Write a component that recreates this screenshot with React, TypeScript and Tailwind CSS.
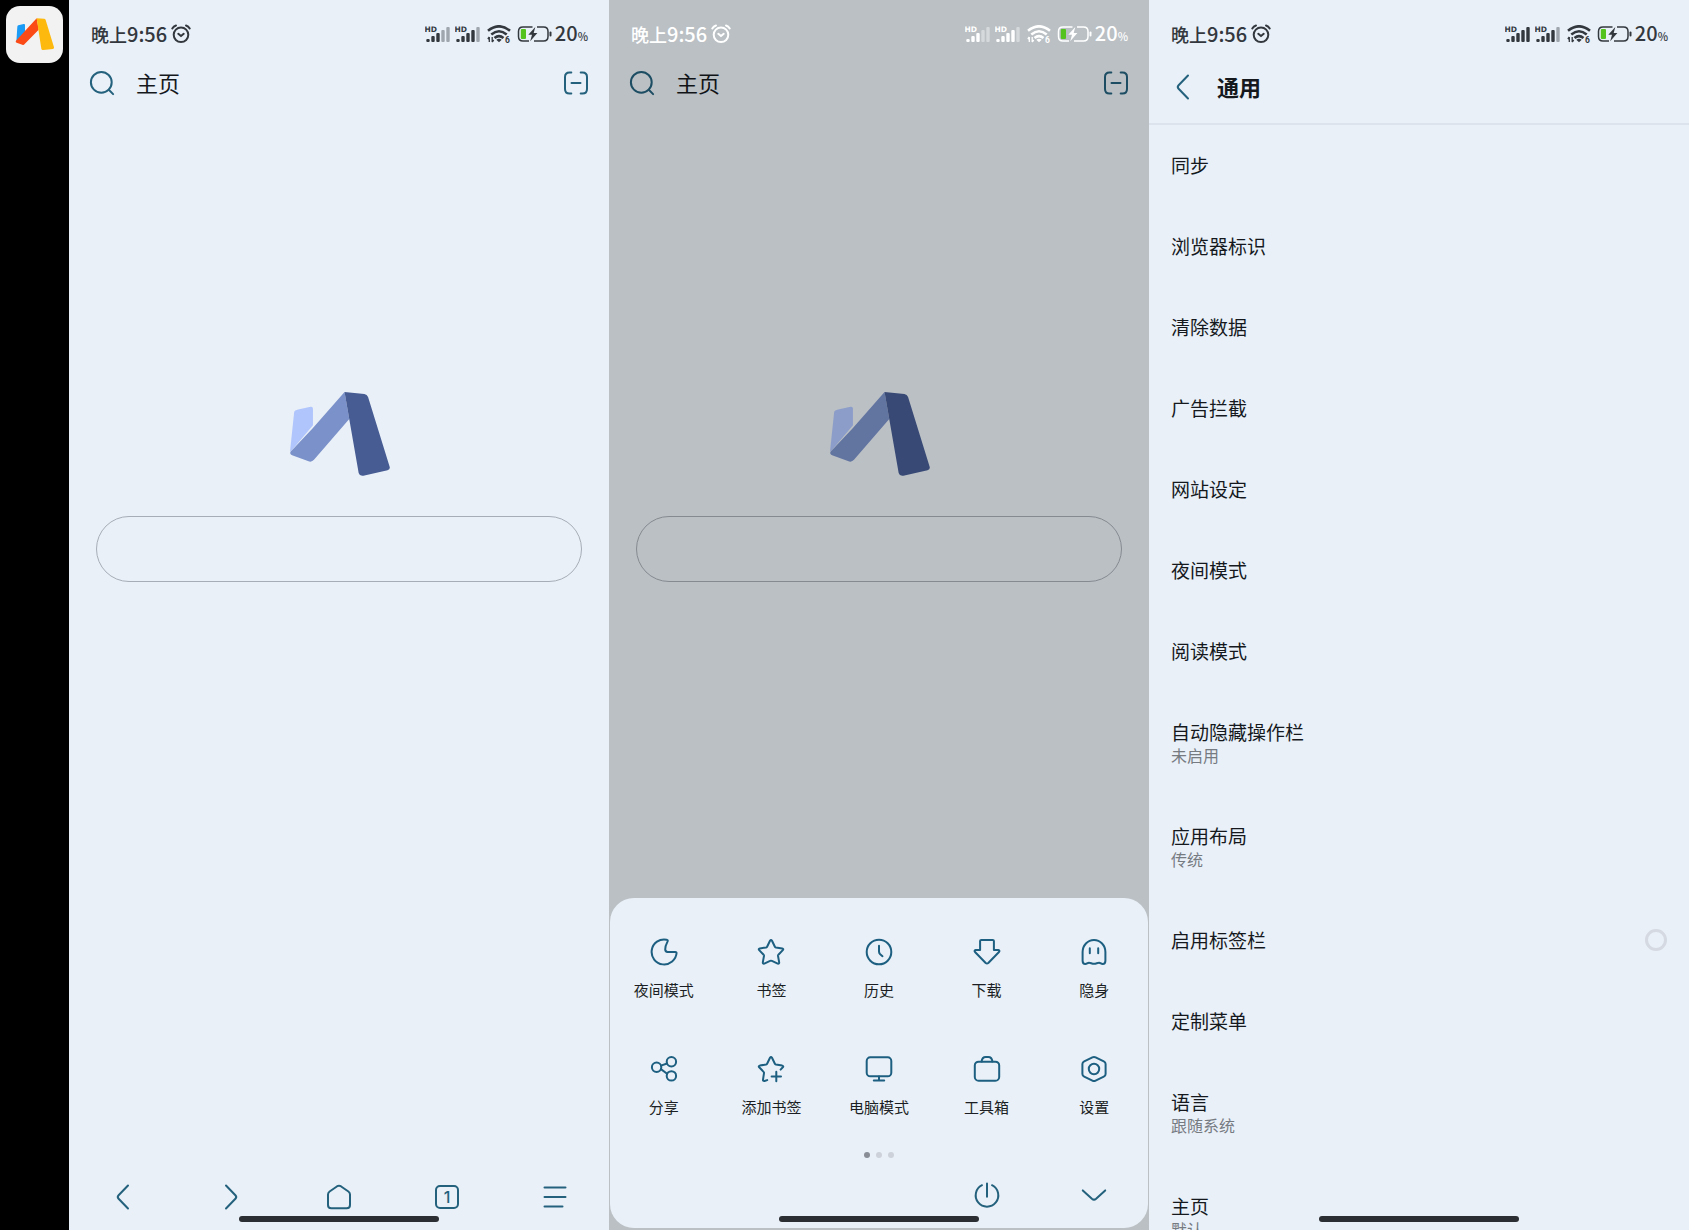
import React from "react";

type IconProps = { children: React.ReactNode; size?: number };

function Icon({ children, size = 28 }: IconProps) {
  return (
    <svg
      width={size}
      height={size}
      viewBox="0 0 28 28"
      fill="none"
      stroke="currentColor"
      strokeWidth="2"
      strokeLinecap="round"
      strokeLinejoin="round"
      aria-hidden="true"
    >
      {children}
    </svg>
  );
}

const ChevronLeft = () => (
  <Icon>
    <path d="M19 2.5 9.6 12.2q-1.7 1.8 0 3.6L19 25.5" />
  </Icon>
);
const ChevronRight = () => (
  <Icon>
    <path d="M9 2.5l9.4 9.7q1.7 1.8 0 3.6L9 25.5" />
  </Icon>
);
const ChevronDown = () => (
  <Icon>
    <path d="M2.8 9.4l9.1 8.3q2.1 1.8 4.2 0l9.1-8.3" />
  </Icon>
);
const HomeIcon = () => (
  <Icon>
    <path d="M12.2 3.2q1.8-1.1 3.6 0l7.6 5.3q1.6 1.1 1.6 3V22q0 3.3-3.3 3.3H6.3Q3 25.3 3 22V11.500q0-1.900 1.600-3z" />
  </Icon>
);
const MenuIcon = () => (
  <Icon>
    <path d="M3.500 4.500h21M3.500 14h21M3.500 23.500h18" />
  </Icon>
);
const SearchIcon = () => (
  <Icon>
    <circle cx="13.300" cy="13.300" r="10.400" />
    <path d="M20.800 20.800l4.300 4.300" />
  </Icon>
);
const ScanIcon = () => (
  <Icon>
    <path d="M9.300 3.500H7.500q-4.500 0-4.500 4.500v12q0 4.500 4.500 4.500h1.800M18.700 3.500h1.800q4.500 0 4.500 4.500v12q0 4.500-4.500 4.500h-1.800M9.500 14h9" />
  </Icon>
);
const MoonIcon = () => (
  <Icon>
    <path d="M16.600 1.700A12.500 12.500 0 1 0 26.600 14.800Q26.500 13.900 25.400 13.900H17.500Q15.300 13.700 15.200 11.400Q15.200 8 17.600 3.400Q18.200 2.100 16.600 1.700Z" />
  </Icon>
);
const StarIcon = () => (
  <Icon>
    <path d="M13 2.700q1-1.600 2 0l2.900 6q.3.600 1 .8l6.300.9q1.700.4.600 1.700l-4.400 4.600q-.5.500-.4 1.200l1.200 6.500q.1 1.700-1.500 1.200l-5.800-2.700q-.9-.4-1.800 0l-5.800 2.700q-1.600.500-1.500-1.200L7 17.900q.1-.7-.4-1.200l-4.400-4.600q-1.100-1.300.6-1.700l6.300-.9q.7-.2 1-.8z" />
  </Icon>
);
const StarPlusIcon = () => (
  <Icon>
    <path d="M10.200 25.100l-2.700.9q-1.600.300-1.500-1.300L7 18.100q.1-.7-.4-1.200l-4.400-4.600q-1.100-1.300.6-1.700l6.300-1.100q.7-.2 1-.8L13 2.800q1-1.500 2 0l2.900 5.900q.3.600 1 .8l6.300 1.100q1.700.4.600 1.700l-2.200 2.300" />
    <path d="M19.300 16.800v9.400M14.600 21.500H24" />
  </Icon>
);
const ClockIcon = () => (
  <Icon>
    <circle cx="14" cy="14" r="12.300" />
    <path d="M14 7.800v5.800q0 1.600 1.200 2.700l2.300 1.900" />
  </Icon>
);
const DownloadIcon = () => (
  <Icon>
    <path d="M8.300 1.900h11.400q1.200 0 1.200 1.200v9h4.400q1.900.4.700 1.900L15.300 25q-1.300 1.100-2.600 0L2 14q-1.200-1.500.7-1.900h4.400v-9q0-1.200 1.200-1.200z" />
  </Icon>
);
const GhostIcon = () => (
  <Icon>
    <path d="M2.600 14a11.400 12.100 0 0 1 22.800 0v8.700q0 3.200-2.700 3.300c-1.600.1-2-1.300-3.700-1.300s-2.900 1.100-5 1.100-3.300-1.100-5-1.100-2.100 1.400-3.700 1.300q-2.700-.1-2.700-3.300z" />
    <path d="M9.800 10.300v5M18.200 10.300v5" />
  </Icon>
);
const ShareIcon = () => (
  <Icon>
    <circle cx="6.600" cy="12.200" r="4.700" />
    <circle cx="21.400" cy="6.700" r="4.700" />
    <circle cx="21.400" cy="20.900" r="4.700" />
    <path d="M11 10.600l6-2.100M10.900 14.100l6.200 4.700" />
  </Icon>
);
const MonitorIcon = () => (
  <Icon>
    <rect x="1.700" y="2.300" width="24.600" height="19" rx="3.600" />
    <path d="M14 21.500v3.900M8.800 25.500h10.400" />
  </Icon>
);
const ToolboxIcon = () => (
  <Icon>
    <rect x="1.800" y="6.700" width="24.400" height="19" rx="3.800" />
    <path d="M8.600 6.500q.6-4.600 4.100-4.600h2.600q3.500 0 4.100 4.600" />
  </Icon>
);
const SettingsIcon = () => (
  <Icon>
    <path d="M12.400 2.300q1.600-.8 3.200 0l8.200 4q1.800.9 1.800 2.800v9.800q0 1.900-1.800 2.800l-8.200 4q-1.600.8-3.200 0l-8.200-4q-1.800-.9-1.800-2.800V9.100q0-1.900 1.800-2.800z" />
    <circle cx="14" cy="14" r="5.200" />
  </Icon>
);
const PowerIcon = () => (
  <Icon>
    <path d="M9 4.200a11.300 11.300 0 1 0 10 0M14 2.500v13.300" />
  </Icon>
);

function Signal({ strong }: { strong: number }) {
  return (
    <svg width="25" height="18" viewBox="0 0 25 18" fill="currentColor" aria-hidden="true">
      <text x="-0.500" y="6.500" fontSize="7.500" fontWeight="700" fontFamily="DejaVu Sans, sans-serif">
        HD
      </text>
      {[3, 6, 9, 12, 15].map((h, i) => (
        <rect
          key={h}
          x={1.3 + i * 5}
          y={17 - h}
          width="3.400"
          height={h}
          rx="1"
          opacity={i < strong ? 1 : 0.4}
        />
      ))}
    </svg>
  );
}

function StatusBar({ signals, light = false }: { signals: [number, number]; light?: boolean }) {
  return (
    <div
      className={`relative z-10 flex h-[68px] shrink-0 items-center justify-between pr-[21px] pl-[22px] ${
        light ? "text-white" : "text-[#33383e]"
      }`}
    >
      <div className="flex items-center gap-1 font-medium">
        <span className="flex items-baseline text-lg leading-6">
          晚上<span className="text-[20px]">9:56</span>
        </span>
        <svg
          width="20"
          height="20"
          viewBox="0 0 20 20"
          fill="none"
          stroke="currentColor"
          strokeWidth="2"
          strokeLinecap="round"
          strokeLinejoin="round"
          aria-hidden="true"
        >
          <circle cx="10" cy="10.800" r="7.300" />
          <path d="M1.300 4.400Q2.600 2.200 5 1.500M18.700 4.400Q17.400 2.200 15 1.500M7.300 9.800l2.700 2.300 2.700-2.300" />
        </svg>
      </div>
      <div className="flex items-center">
        <Signal strong={signals[0]} />
        <span className="w-[5px]" />
        <Signal strong={signals[1]} />
        <svg className="ml-[7px]" width="24" height="18" viewBox="0 0 24 18" aria-hidden="true">
          <g fill="none" stroke="currentColor" strokeWidth="2.600">
            <path d="M1 5.800Q12-3.200 23 5.800" />
            <path d="M4.300 9.500Q12 3 19.700 9.500" />
            <path d="M7.500 13Q12 9.300 16.500 13" />
          </g>
          <path d="M9.300 14.800q2.700-1.900 5.400 0L12 17.300z" fill="currentColor" />
          <path d="M2.300 12v5M0.800 14l1.500-2M5.200 12v5M5.200 17l1.500-2" stroke="currentColor" strokeWidth="1.300" />
          <text x="18" y="17.500" fontSize="8.500" fontWeight="700" fill="currentColor" fontFamily="Roboto, sans-serif">
            6
          </text>
        </svg>
        <svg className="ml-[6px]" width="35" height="18" viewBox="0 0 35 18" aria-hidden="true">
          <path
            d="M15.500 1.900H6Q1.500 1.900 1.500 6.400v5Q1.500 15.900 6 15.900H12M20 1.900h6.500q4.500 0 4.500 4.500v5q0 4.500-4.500 4.500H17"
            fill="none"
            stroke="currentColor"
            strokeWidth="1.500"
          />
          <rect x="3.800" y="4" width="5.200" height="10" rx="1" fill="#55c31f" />
          <path d="M18.300 2 11.300 9.800h3.700L13.200 16.300l7.200-8.200h-3.700z" fill="currentColor" />
          <rect x="32.500" y="6.500" width="2" height="5" rx="1" fill="currentColor" />
        </svg>
        <span className="ml-[3px] flex items-baseline text-[20px] leading-6 font-medium">
          20<span className="text-[11px]">%</span>
        </span>
      </div>
    </div>
  );
}

function Logo() {
  return (
    <svg width="102" height="84" viewBox="86 66 303 250" aria-label="浏览器标志" role="img">
      <path d="M116 118l37-8q7-1 7 6v49l-66 78q-2 1-2-3l12-114q1-6 12-8z" fill="#b0c5fc" />
      <path d="M254 66l14 80-105 122q-6 7-14 5l-51-19q-9-4-4-11l66-70z" fill="#7b91c9" />
      <path d="M254 66l59 6q8 1 11 9l64 207q3 8-6 11l-72 16q-11 2-14-8z" fill="#465c93" />
    </svg>
  );
}

function HomeHeader() {
  return (
    <header className="flex h-[30px] shrink-0 items-center px-[19px]">
      <button type="button" aria-label="搜索" className="text-[#24617c]">
        <SearchIcon />
      </button>
      <h1 className="ml-5 flex-1 self-start text-[22px] leading-7 text-[#15191d]">主页</h1>
      <button type="button" aria-label="扫一扫" className="text-[#24617c]">
        <ScanIcon />
      </button>
    </header>
  );
}

function StartPage() {
  return (
    <main className="flex flex-1 flex-col items-center gap-10 px-[27px] pt-[294px]">
      <Logo />
      <input
        type="search"
        aria-label="搜索或输入网址"
        className="h-[66px] w-full rounded-full border border-[#a7adb6] bg-transparent px-8 text-lg outline-none"
      />
    </main>
  );
}

function GestureBar() {
  return (
    <div className="absolute bottom-2 left-1/2 z-20 h-[6px] w-[200px] -translate-x-1/2 rounded-full bg-[#2b2e32]" />
  );
}

function BottomNav() {
  const items = [
    { label: "后退", icon: <ChevronLeft /> },
    { label: "前进", icon: <ChevronRight /> },
    { label: "主页", icon: <HomeIcon /> },
    {
      label: "标签页 1",
      icon: (
        <span className="flex size-6 items-center justify-center rounded-[5px] border-2 border-current font-['Inter',sans-serif] text-base leading-5 font-medium">
          1
        </span>
      ),
    },
    { label: "菜单", icon: <MenuIcon /> },
  ];
  return (
    <nav className="grid h-[67px] shrink-0 grid-cols-5 text-[#24617c]">
      {items.map((item) => (
        <button key={item.label} type="button" aria-label={item.label} className="flex items-center justify-center">
          {item.icon}
        </button>
      ))}
    </nav>
  );
}

const menuItems = [
  { label: "夜间模式", icon: <MoonIcon /> },
  { label: "书签", icon: <StarIcon /> },
  { label: "历史", icon: <ClockIcon /> },
  { label: "下载", icon: <DownloadIcon /> },
  { label: "隐身", icon: <GhostIcon /> },
  { label: "分享", icon: <ShareIcon /> },
  { label: "添加书签", icon: <StarPlusIcon /> },
  { label: "电脑模式", icon: <MonitorIcon /> },
  { label: "工具箱", icon: <ToolboxIcon /> },
  { label: "设置", icon: <SettingsIcon /> },
];

function MenuSheet() {
  return (
    <section
      aria-label="菜单"
      className="absolute inset-x-px bottom-[2px] z-10 rounded-3xl bg-[#e9f0f8] pt-10"
    >
      <div className="grid grid-cols-5">
        {menuItems.map((item) => (
          <button key={item.label} type="button" className="flex h-[117px] flex-col items-center gap-[14px]">
            <span className="text-[#1d5f80]">{item.icon}</span>
            <span className="text-[15px] leading-5 text-[#1b1f24]">{item.label}</span>
          </button>
        ))}
      </div>
      <div className="-mt-5 flex justify-center gap-[6px]">
        <span className="size-[6px] rounded-full bg-[#888d96]" />
        <span className="size-[6px] rounded-full bg-[#cdd2da]" />
        <span className="size-[6px] rounded-full bg-[#cdd2da]" />
      </div>
      <div className="mt-1 grid h-[66px] grid-cols-5 text-[#24617c]">
        <button type="button" aria-label="退出" className="col-start-4 flex items-center justify-center">
          <PowerIcon />
        </button>
        <button type="button" aria-label="收起" className="flex items-center justify-center">
          <ChevronDown />
        </button>
      </div>
    </section>
  );
}

const settings: { title: string; note?: string; toggle?: boolean }[] = [
  { title: "同步" },
  { title: "浏览器标识" },
  { title: "清除数据" },
  { title: "广告拦截" },
  { title: "网站设定" },
  { title: "夜间模式" },
  { title: "阅读模式" },
  { title: "自动隐藏操作栏", note: "未启用" },
  { title: "应用布局", note: "传统" },
  { title: "启用标签栏", toggle: true },
  { title: "定制菜单" },
  { title: "语言", note: "跟随系统" },
  { title: "主页", note: "默认" },
];

function SettingRow({ title, note, toggle }: { title: string; note?: string; toggle?: boolean }) {
  const text = "block text-[19px] leading-[25px] text-[#15191d]";
  if (toggle) {
    return (
      <label className="flex items-center justify-between px-[22px] pt-[27px] pb-[29px]">
        <span className={text}>{title}</span>
        <input type="checkbox" className="size-[22px] appearance-none rounded-full border-[3px] border-[#d4d9e2]" />
      </label>
    );
  }
  return (
    <button type="button" className="block w-full px-[22px] pt-[27px] pb-[29px] text-left">
      <span className={text}>{title}</span>
      {note && <span className="block text-base leading-[23px] text-[#767b82]">{note}</span>}
    </button>
  );
}

export default function App() {
  const screen = "relative flex min-w-0 flex-1 flex-col overflow-hidden bg-[#e9f0f8]";
  const dimmedScreen = "relative flex min-w-0 flex-1 flex-col overflow-hidden bg-[#e9f0f5]";
  return (
    <div className="flex h-screen overflow-hidden bg-black font-['Noto_Sans_CJK_SC',sans-serif]">
      <aside className="w-[69px] shrink-0 p-[6px]">
        <div className="flex size-[57px] items-center justify-center rounded-[14px] bg-[#f2f2f2]">
          <svg width="57" height="57" viewBox="0 0 171 171" role="img" aria-label="浏览器">
            <path d="M37 58l16-4q4-1 4 3v20L31 108l3-46q0-3 3-4z" fill="#1a9bf5" />
            <path d="M92 37l6 34-42 43q-3 4-7 2l-17-6q-5-2-2-6z" fill="#fb4a16" />
            <path d="M92 37l22 1q4 0 5 4l25 82q1 4-3 5l-29 3q-5 1-6-4z" fill="#fdb90d" />
          </svg>
        </div>
      </aside>

      <section className={screen}>
        <StatusBar signals={[3, 4]} />
        <HomeHeader />
        <StartPage />
        <BottomNav />
        <GestureBar />
      </section>

      <section className={dimmedScreen}>
        <StatusBar signals={[3, 4]} light />
        <HomeHeader />
        <StartPage />
        <div className="absolute inset-0 bg-black/20" />
        <MenuSheet />
        <GestureBar />
      </section>

      <section className={screen}>
        <StatusBar signals={[5, 4]} />
        <header className="flex h-[57px] shrink-0 items-start border-b-2 border-[#dde3ed] pl-5">
          <button type="button" aria-label="返回" className="mt-[5px] text-[#24617c]">
            <ChevronLeft />
          </button>
          <h1 className="ml-5 text-[22px] leading-9 font-bold text-[#15191d]">通用</h1>
        </header>
        <main className="min-h-0 flex-1 overflow-hidden">
          {settings.map((row) => (
            <SettingRow key={row.title} {...row} />
          ))}
        </main>
        <GestureBar />
      </section>
    </div>
  );
}
